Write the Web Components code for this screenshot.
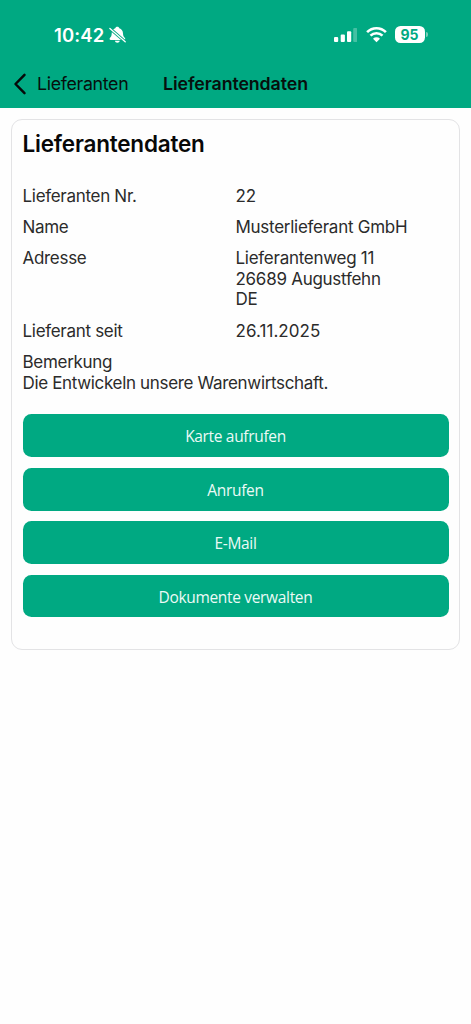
<!DOCTYPE html>
<html lang="de">
<head>
<meta charset="utf-8">
<meta name="viewport" content="width=device-width, initial-scale=1">
<title>Lieferantendaten</title>
<style>
html, body { margin: 0; height: 100%; background: #fefefe; overflow: hidden; }
body { font-family: Inter, "Liberation Sans", sans-serif; color: #2b2b2b; }
</style>
</head>
<body>
<supplier-screen></supplier-screen>
<script>
const define = (name, html) => {
  const template = document.createElement('template');
  template.innerHTML = html;
  customElements.define(name, class extends HTMLElement {
    constructor() {
      super();
      this.attachShadow({ mode: 'open' }).append(template.content.cloneNode(true));
    }
  });
};

define('status-bar', `
<style>
:host { display: flex; align-items: center; height: 69px; box-sizing: border-box; padding: 0 43.500px 0 54px; color: #fff; }
.time { width: 50.500px; font-size: 18.5px; font-weight: 600; letter-spacing: .1px; line-height: 24px; }
.bell { margin-left: 4px; }
.signal { margin-left: auto; }
.wifi { margin-left: 8.500px; }
.battery { margin-left: 8px; display: flex; align-items: center; }
.level { width: 30px; height: 17px; border-radius: 5.5px; background: #fff; color: #00a982; font-size: 14px; font-weight: 700; line-height: 17px; text-align: center; }
.tip { width: 2px; height: 5px; margin-left: 1px; border-radius: 0 2px 2px 0; background: #79cdb7; }
svg { display: block; flex: none; }
</style>
<span class="time">10:42</span>
<svg class="bell" width="17" height="18" viewBox="0 0 17 18">
  <path fill="#fff" d="M8.300 .8c1.100 0 1.900.7 2 1.500 2.400.7 3.600 2.600 3.700 5.100.1 2.300.7 3.300 1.900 4.500.8.8.3 2-.9 2H1.800c-1.200 0-1.700-1.200-.9-2 1.200-1.200 1.700-2.200 1.800-4.500.1-2.500 1.300-4.400 3.600-5.100.1-.8.9-1.500 2-1.500Z"/>
  <path fill="#fff" d="M5.900 14.700h4.900c-.2 1.200-1.200 2-2.450 2s-2.250-.8-2.450-2Z"/>
  <path stroke="#00a982" stroke-width="3" d="M-.3 1.400 17 16.400"/>
  <path stroke="#fff" stroke-width="1.300" stroke-linecap="round" d="M.9 2.400 16.200 15.700"/>
</svg>
<svg class="signal" width="23" height="16" viewBox="0 0 23 16" fill="#fff">
  <rect x="0" y="10" width="4.200" height="5" rx="1"/><rect x="6.700" y="7.500" width="4.200" height="7.500" rx="1"/>
  <rect x="13" y="4.200" width="4.200" height="10.800" rx="1"/><rect x="19.200" y="1" width="4" height="14" rx="1" opacity=".27"/>
</svg>
<svg class="wifi" width="21" height="16" viewBox="0 0 21 16" fill="none" stroke="#fff" stroke-width="2.600">
  <path d="M1.100 5.200a13.300 13.300 0 0 1 18.800 0"/><path d="M4.500 8.700a8.500 8.500 0 0 1 12 0"/>
  <path fill="#fff" stroke="none" d="M10.500 15.200 7 11.700a5 5 0 0 1 7 0Z"/>
</svg>
<span class="battery"><span class="level">95</span><span class="tip"></span></span>`);

define('nav-bar', `
<style>
:host { display: flex; align-items: center; height: 30px; padding-left: 13px; color: #070f0d; font-size: 17.8px; line-height: 24px; white-space: nowrap; }
svg { display: block; flex: none; }
.back { width: 103px; margin: 0 23px 0 9px; display: block; letter-spacing: -.32px; }
.title { font-weight: 600; letter-spacing: -.1px; }
</style>
<svg width="15" height="24" viewBox="0 0 15 24"><path d="M11.500 2.800 2.500 12l9 9.200" fill="none" stroke="#050a09" stroke-width="2.500" stroke-linecap="round" stroke-linejoin="round"/></svg>
<span class="back"><slot name="back"></slot></span>
<span class="title"><slot></slot></span>`);

define('app-header', `
<style>
:host { display: block; height: 107.5px; background: #00a982; }
</style><slot></slot>`);

define('info-card', `
<style>
:host { display: block; box-sizing: border-box; height: 531px; margin: 11.500px 11px 0; padding: 9.900px 10.500px 0; border: 1px solid #e3e3e5; border-radius: 11px; }
h1 { margin: 0 0 27.700px; color: #080808; font-size: 22.500px; line-height: 28px; font-weight: 600; letter-spacing: -.2px; }
</style><h1><slot name="heading"></slot></h1><slot></slot>`);

define('info-row', `
<style>
:host { display: grid; grid-template-columns: 1fr 1fr; margin-bottom: 10.850px; font-size: 17px; line-height: 20.500px; white-space: nowrap; }
:host([stacked]) { grid-template-columns: 1fr; padding-top: .15px; }
.label { letter-spacing: -.3px; }
.value { letter-spacing: var(--tracking, -.27px); }
</style><span class="label"><slot name="label"></slot></span><span class="value"><slot></slot></span>`);

define('action-button', `
<style>
:host { display: block; margin-bottom: 10.700px; }
button { display: block; box-sizing: border-box; width: 100%; height: 42.800px; border: 0; border-radius: 8.500px; padding: 2px 0 0; background: #00a982; color: #ecfaf6; font: 15.500px/40.800px "Open Sans", sans-serif; letter-spacing: -.33px; }
</style><button><slot></slot></button>`);

define('button-list', `
<style>:host { display: block; padding-top: 10.300px; }</style><slot></slot>`);

define('supplier-screen', `
<style>
:host { display: block; height: 1024px; }
.plain { --tracking: 0px; }
.date { --tracking: .06px; }
.note { --tracking: -.34px; }
</style>
<app-header>
  <status-bar></status-bar>
  <nav-bar><span slot="back">Lieferanten</span>Lieferantendaten</nav-bar>
</app-header>
<info-card>
  <span slot="heading">Lieferantendaten</span>
  <info-row class="plain"><span slot="label">Lieferanten Nr.</span>22</info-row>
  <info-row><span slot="label">Name</span>Musterlieferant GmbH</info-row>
  <info-row><span slot="label">Adresse</span>Lieferantenweg 11<br>26689 Augustfehn<br>DE</info-row>
  <info-row class="date"><span slot="label">Lieferant seit</span>26.11.2025</info-row>
  <info-row class="note" stacked><span slot="label">Bemerkung</span>Die Entwickeln unsere Warenwirtschaft.</info-row>
  <button-list>
    <action-button>Karte aufrufen</action-button>
    <action-button>Anrufen</action-button>
    <action-button>E-Mail</action-button>
    <action-button>Dokumente verwalten</action-button>
  </button-list>
</info-card>`);
</script>
</body>
</html>
